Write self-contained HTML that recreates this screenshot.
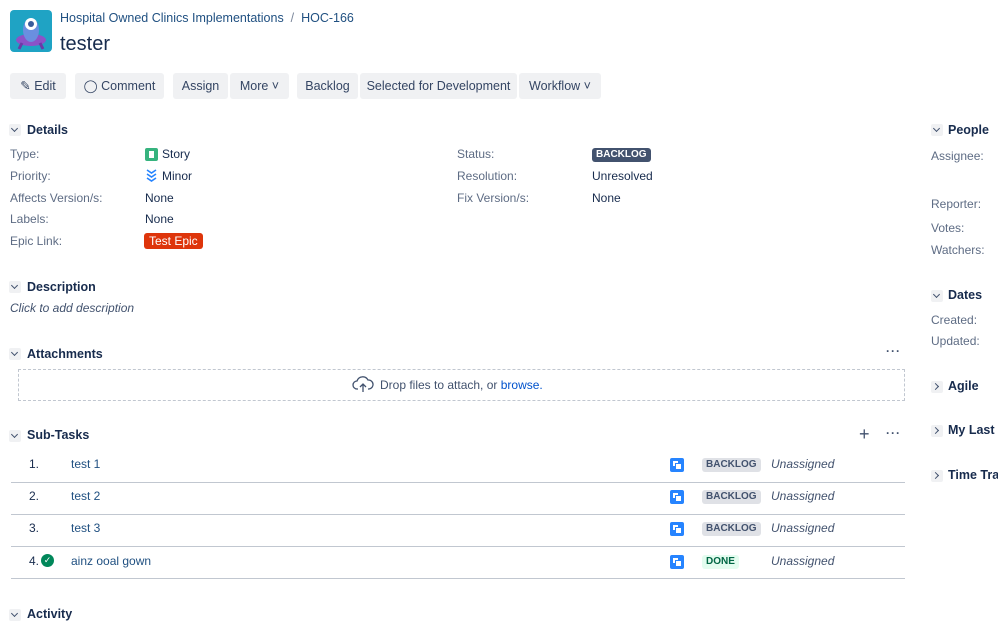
<!DOCTYPE html>
<html><head><meta charset="utf-8"><style>
body{margin:0;width:998px;height:631px;overflow:hidden;background:#fff;font-family:"Liberation Sans",sans-serif;font-size:12px;color:#172b4d;position:relative}
.a{position:absolute;white-space:nowrap;line-height:16px}
.lbl{color:#5e6c84}
.lnk{color:#205081}
.btn{position:absolute;top:73px;height:26px;background:#f0f1f3;border-radius:3px;line-height:26px;text-align:center;color:#344563;font-size:12.5px}
.h{font-weight:bold;font-size:12.5px;color:#172b4d}
.chev{position:absolute;width:12px;height:12px;background:#f0f1f3;border-radius:2px}
.chev:after{content:"";position:absolute;left:3px;top:2px;width:4px;height:4px;border-right:1.6px solid #42526e;border-bottom:1.6px solid #42526e;transform:rotate(45deg)}
.chr:after{transform:rotate(-45deg);left:2px;top:3px}
.tag{position:absolute;font-size:10px;font-weight:bold;padding:0 4px;border-radius:3px;line-height:14px}
.bl{background:#dfe1e6;color:#42526e}
.sub{position:absolute;width:14px;height:14px;background:#2684ff;border-radius:2px}
.sub:before{content:"";position:absolute;left:3px;top:3px;width:5px;height:5px;background:#fff}
.sub:after{content:"";position:absolute;left:6px;top:6px;width:5px;height:5px;background:#fff;outline:1px solid #2684ff}
.line{position:absolute;left:11px;width:894px;height:1px;background:#c1c7d0}
.dots{position:absolute;font-weight:bold;color:#42526e;font-size:12px;letter-spacing:1px}
</style></head><body>
<svg class="a" style="left:10px;top:10px" width="42" height="42" viewBox="0 0 42 42"><rect width="42" height="42" rx="4" fill="#1fa3c4"/><ellipse cx="21" cy="30" rx="15" ry="6" fill="#8b53c8"/><path d="M12 33l-3 6M30 33l3 6" stroke="#6c3aa8" stroke-width="3"/><ellipse cx="21" cy="20" rx="8" ry="12" fill="#6a8fe0"/><circle cx="21" cy="14" r="6" fill="#fff"/><circle cx="21" cy="14" r="3" fill="#3a5c9c"/></svg>
<div class="a lnk" style="left:60px;top:10px;font-size:12.5px">Hospital Owned Clinics Implementations <span style="color:#7a869a">&nbsp;/&nbsp;</span> HOC-166</div>
<div class="a" style="left:60px;top:31px;font-size:20px;line-height:26px;color:#172b4d">tester</div>

<div class="btn" style="left:10px;width:56px">✎ Edit</div>
<div class="btn" style="left:75px;width:89px">◯ Comment</div>
<div class="btn" style="left:173px;width:55px">Assign</div>
<div class="btn" style="left:230px;width:59px">More ˅</div>
<div class="btn" style="left:297px;width:61px">Backlog</div>
<div class="btn" style="left:360px;width:157px">Selected for Development</div>
<div class="btn" style="left:519px;width:82px">Workflow ˅</div>

<div class="chev" style="left:9px;top:124px"></div><div class="a h" style="left:27px;top:122px">Details</div>
<div class="a lbl" style="left:10px;top:146px">Type:</div>
<div class="a lbl" style="left:10px;top:168px">Priority:</div>
<div class="a lbl" style="left:10px;top:190px">Affects Version/s:</div>
<div class="a lbl" style="left:10px;top:211px">Labels:</div>
<div class="a lbl" style="left:10px;top:233px">Epic Link:</div>
<div class="a" style="left:145px;top:148px;width:13px;height:13px;background:#36b37e;border-radius:2px"></div>
<div class="a" style="left:149px;top:151px;width:5px;height:7px;background:#fff"></div>
<div class="a" style="left:162px;top:146px">Story</div>
<svg class="a" style="left:145px;top:168px" width="13" height="14" viewBox="0 0 13 14"><path d="M2 2l4.5 3L11 2M2 6l4.5 3L11 6M2 10l4.5 3L11 10" fill="none" stroke="#2684ff" stroke-width="1.6"/></svg>
<div class="a" style="left:162px;top:168px">Minor</div>
<div class="a" style="left:145px;top:190px">None</div>
<div class="a" style="left:145px;top:211px">None</div>
<div class="a" style="left:144px;top:233px;background:#de350b;color:#fff;padding:0 5px;border-radius:3px">Test Epic</div>
<div class="a lbl" style="left:457px;top:146px">Status:</div>
<div class="a lbl" style="left:457px;top:168px">Resolution:</div>
<div class="a lbl" style="left:457px;top:190px">Fix Version/s:</div>
<div class="tag" style="left:592px;top:148px;background:#42526e;color:#fff">BACKLOG</div>
<div class="a" style="left:592px;top:168px">Unresolved</div>
<div class="a" style="left:592px;top:190px">None</div>

<div class="chev" style="left:9px;top:281px"></div><div class="a h" style="left:27px;top:279px">Description</div>
<div class="a" style="left:10px;top:300px;font-style:italic;color:#42526e">Click to add description</div>

<div class="chev" style="left:9px;top:348px"></div><div class="a h" style="left:27px;top:346px">Attachments</div>
<div class="dots" style="left:886px;top:344px">···</div>
<div class="a" style="left:18px;top:369px;width:885px;height:30px;border:1px dashed #c1c7d0"></div>
<svg class="a" style="left:352px;top:376px" width="22" height="17" viewBox="0 0 22 17"><path d="M6 13H5a4 4 0 0 1 0-8 6 6 0 0 1 11-1 4.5 4.5 0 0 1 1 9h-1" fill="none" stroke="#42526e" stroke-width="1.3"/><path d="M11 16V8M8 11l3-3 3 3" fill="none" stroke="#42526e" stroke-width="1.3"/></svg>
<div class="a" style="left:380px;top:377px;color:#42526e">Drop files to attach, or <span style="color:#0052cc">browse.</span></div>

<div class="chev" style="left:9px;top:430px"></div><div class="a h" style="left:27px;top:427px">Sub-Tasks</div>
<div class="a" style="left:859px;top:426px;font-size:18px;color:#42526e">+</div>
<div class="dots" style="left:886px;top:426px">···</div>

<div class="a" style="left:29px;top:456px">1.</div><div class="a lnk" style="left:71px;top:456px">test 1</div>
<div class="sub" style="left:670px;top:458px"></div><div class="tag bl" style="left:702px;top:458px">BACKLOG</div><div class="a" style="left:771px;top:456px;font-style:italic;color:#42526e">Unassigned</div>
<div class="line" style="top:482px"></div>
<div class="a" style="left:29px;top:488px">2.</div><div class="a lnk" style="left:71px;top:488px">test 2</div>
<div class="sub" style="left:670px;top:490px"></div><div class="tag bl" style="left:702px;top:490px">BACKLOG</div><div class="a" style="left:771px;top:488px;font-style:italic;color:#42526e">Unassigned</div>
<div class="line" style="top:514px"></div>
<div class="a" style="left:29px;top:520px">3.</div><div class="a lnk" style="left:71px;top:520px">test 3</div>
<div class="sub" style="left:670px;top:522px"></div><div class="tag bl" style="left:702px;top:522px">BACKLOG</div><div class="a" style="left:771px;top:520px;font-style:italic;color:#42526e">Unassigned</div>
<div class="line" style="top:546px"></div>
<div class="a" style="left:29px;top:553px">4.</div>
<div class="a" style="left:41px;top:554px;width:13px;height:13px;border-radius:50%;background:#00875a;color:#fff;font-size:9px;line-height:13px;text-align:center">✓</div>
<div class="a lnk" style="left:71px;top:553px">ainz ooal gown</div>
<div class="sub" style="left:670px;top:555px"></div><div class="tag" style="left:702px;top:555px;background:#e3fcef;color:#006644">DONE</div><div class="a" style="left:771px;top:553px;font-style:italic;color:#42526e">Unassigned</div>
<div class="line" style="top:578px"></div>

<div class="chev" style="left:9px;top:609px"></div><div class="a h" style="left:27px;top:606px">Activity</div>

<div class="chev" style="left:931px;top:124px"></div><div class="a h" style="left:948px;top:122px">People</div>
<div class="a lbl" style="left:931px;top:148px">Assignee:</div>
<div class="a lbl" style="left:931px;top:196px">Reporter:</div>
<div class="a lbl" style="left:931px;top:220px">Votes:</div>
<div class="a lbl" style="left:931px;top:242px">Watchers:</div>
<div class="chev" style="left:931px;top:290px"></div><div class="a h" style="left:948px;top:287px">Dates</div>
<div class="a lbl" style="left:931px;top:312px">Created:</div>
<div class="a lbl" style="left:931px;top:333px">Updated:</div>
<div class="chev chr" style="left:931px;top:381px"></div><div class="a h" style="left:948px;top:378px">Agile</div>
<div class="chev chr" style="left:931px;top:425px"></div><div class="a h" style="left:948px;top:422px">My Last V</div>
<div class="chev chr" style="left:931px;top:470px"></div><div class="a h" style="left:948px;top:467px">Time Trac</div>
</body></html>
